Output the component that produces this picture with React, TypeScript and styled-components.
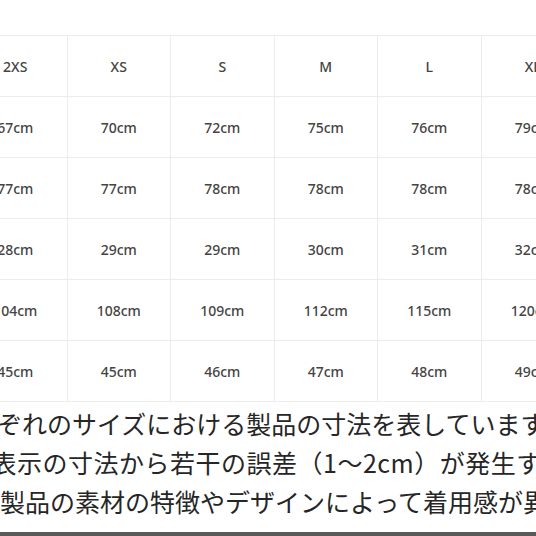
import React from "react";
import styled, { createGlobalStyle } from "styled-components";

const Global = createGlobalStyle`
  html, body { margin: 0; padding: 0; background: #ffffff; }
  body { overflow: hidden; }
`;

const Page = styled.div`
  width: 536px;
  height: 536px;
  overflow: hidden;
  background: #ffffff;
  display: flex;
  flex-direction: column;
`;

const TopSpace = styled.div`
  height: 35px;
  flex: none;
`;

const Table = styled.div`
  margin-left: -36px;
  display: grid;
  grid-template-columns: repeat(6, 103.5px);
  grid-auto-rows: 61px;
  border-top: 1px solid #ececec;
  flex: none;
`;

const Cell = styled.div`
  display: flex;
  align-items: center;
  justify-content: center;
  border-right: 1px solid #ececec;
  border-bottom: 1px solid #ececec;
  font-family: "Noto Sans", "Liberation Sans", sans-serif;
  font-size: 14px;
  font-weight: 500;
  color: #444444;
  white-space: nowrap;
`;

const Notes = styled.div`
  padding-top: 2px;
  display: flex;
  flex-direction: column;
  flex: 1;
`;

const NoteLine = styled.div<{ $offset: number; $spacing?: number }>`
  margin-left: ${(p) => p.$offset}px;
  letter-spacing: ${(p) => p.$spacing ?? 0}px;
  font-family: "Noto Sans CJK JP", "Noto Sans", sans-serif;
  font-size: 25px;
  line-height: 39px;
  color: #262626;
  white-space: nowrap;
`;

const BottomBar = styled.div`
  height: 4px;
  background: #5a5a5a;
  flex: none;
  margin-top: auto;
`;

const header = ["2XS", "XS", "S", "M", "L", "XL"];
const rows = [
  ["67cm", "70cm", "72cm", "75cm", "76cm", "79cm"],
  ["77cm", "77cm", "78cm", "78cm", "78cm", "78cm"],
  ["28cm", "29cm", "29cm", "30cm", "31cm", "32cm"],
  ["104cm", "108cm", "109cm", "112cm", "115cm", "120cm"],
  ["45cm", "45cm", "46cm", "47cm", "48cm", "49cm"],
];

export default function App() {
  return (
    <Page>
      <Global />
      <TopSpace />
      <Table>
        {header.map((h) => (
          <Cell key={h}>{h}</Cell>
        ))}
        {rows.map((r, i) =>
          r.map((v, j) => <Cell key={`${i}-${j}`}>{v}</Cell>)
        )}
      </Table>
      <Notes>
        <NoteLine $offset={-53}>
          それぞれのサイズにおける製品の寸法を表しています。
        </NoteLine>
        <NoteLine $offset={-34} $spacing={0.5}>
          ※表示の寸法から若干の誤差（1～2cm）が発生する場合があります。
        </NoteLine>
        <NoteLine $offset={0}>
          製品の素材の特徴やデザインによって着用感が異なる場合があります。
        </NoteLine>
      </Notes>
      <BottomBar />
    </Page>
  );
}
